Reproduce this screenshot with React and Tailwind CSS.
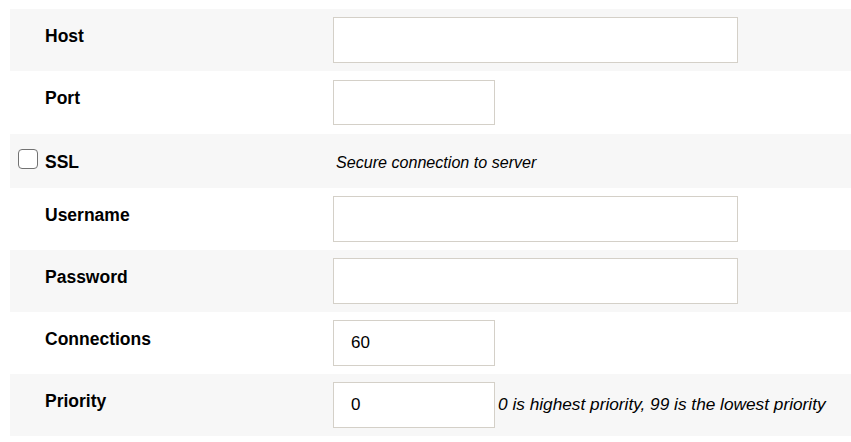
import { useState } from "react";

const FIELDS = [
  { key: "host", label: "Host", wide: true },
  { key: "port", label: "Port", tall: true },
  { key: "ssl", label: "SSL", checkbox: true, help: "Secure connection to server" },
  { key: "username", label: "Username", wide: true },
  { key: "password", label: "Password", wide: true, type: "password" },
  { key: "connections", label: "Connections" },
  { key: "priority", label: "Priority", help: "0 is highest priority, 99 is the lowest priority" },
];

export default function App() {
  const [form, setForm] = useState({
    host: "",
    port: "",
    ssl: false,
    username: "",
    password: "",
    connections: "60",
    priority: "0",
  });

  return (
    <div className="pt-[9px] pl-[10px] bg-white min-h-screen text-black font-['Liberation_Sans',Arial,sans-serif]">
      {FIELDS.map((f, i) => {
        const shaded = i % 2 === 0;
        if (f.checkbox) {
          return (
            <div key={f.key} className={`flex items-center h-[54px] pt-[2px] ${shaded ? "bg-[#f7f7f7]" : ""}`}>
              <label className="w-[323px] shrink-0 flex items-center pl-[8px] cursor-pointer">
                <span
                  onClick={() => setForm({ ...form, ssl: !form.ssl })}
                  className="w-[20px] h-[20px] mb-[7px] rounded-[4px] border-[1.5px] border-[#727272] bg-white flex items-center justify-center text-[13px]"
                >
                  {form.ssl && "✓"}
                </span>
                <span className="ml-[7px] text-[17.5px] font-bold">{f.label}</span>
              </label>
              <span className="pl-[3px] text-[16.1px] italic">{f.help}</span>
            </div>
          );
        }
        return (
          <div
            key={f.key}
            className={`flex items-start ${f.tall ? "py-[9px]" : "py-[8px]"} ${shaded ? "bg-[#f7f7f7]" : ""}`}
          >
            <div className={`w-[323px] shrink-0 pl-[35px] ${f.tall ? "pt-[8px]" : "pt-[9px]"} text-[17.5px] font-bold leading-[20px]`}>
              {f.label}
            </div>
            <input
              type={f.type || "text"}
              value={form[f.key]}
              onChange={(e) => setForm({ ...form, [f.key]: e.target.value })}
              className={`${f.wide ? "w-[405px]" : "w-[162px]"} ${f.tall ? "h-[45px]" : "h-[46px]"} shrink-0 bg-white border border-[#d4d0c8] px-[17px] text-[17px] outline-none`}
            />
            {f.help && <span className="self-center pl-[3px] text-[17.25px] italic">{f.help}</span>}
          </div>
        );
      })}
    </div>
  );
}
